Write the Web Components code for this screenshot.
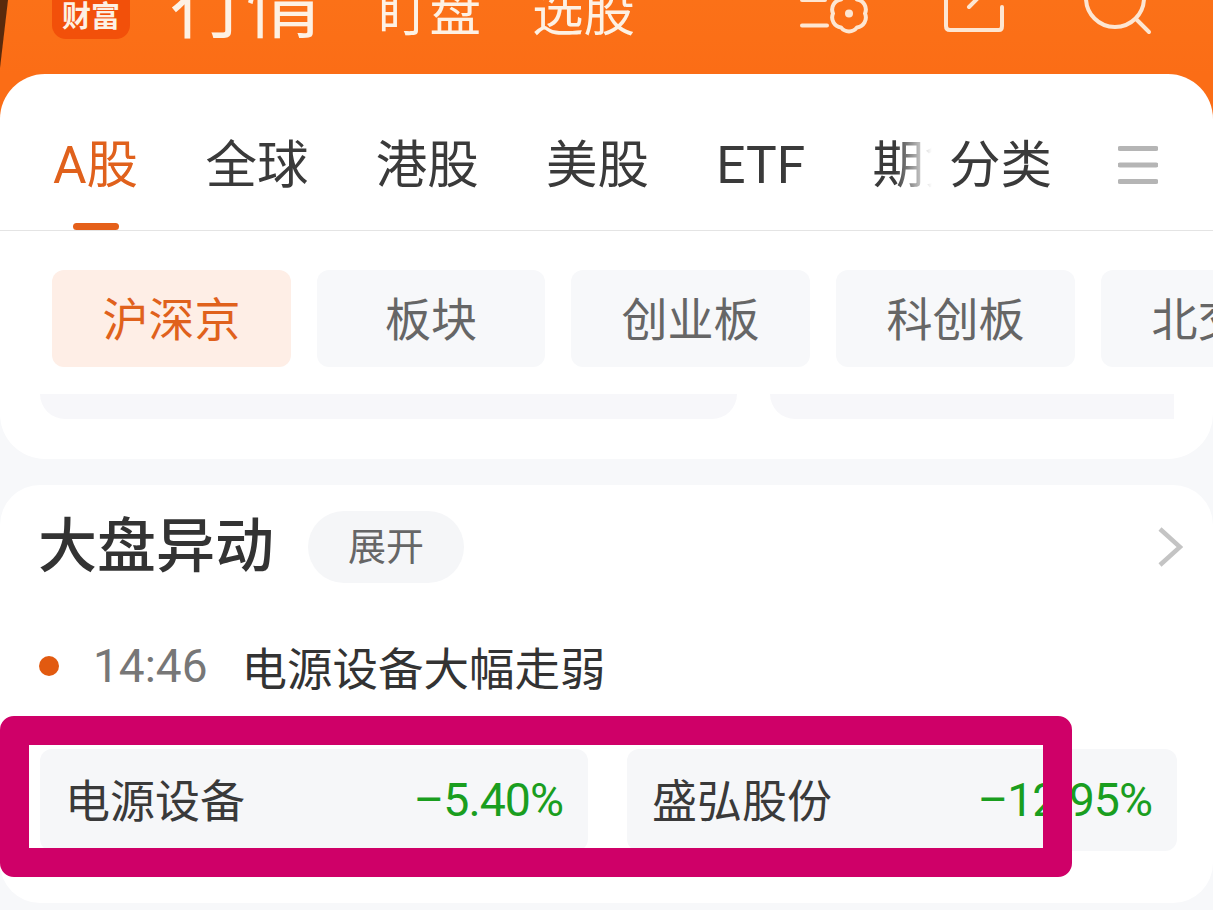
<!DOCTYPE html>
<html lang="zh">
<head>
<meta charset="utf-8">
<title>行情</title>
<style>
  html, body { margin: 0; padding: 0; background: #f7f8fa; }
  body { width: 1213px; height: 910px; overflow: hidden; position: relative; font-family: "Noto Sans CJK SC", sans-serif; color: #333; }
</style>
</head>
<body>
<app-header></app-header>
<market-card></market-card>
<move-card></move-card>
<mark-box></mark-box>

<script>
const CJK = `Roboto, "Noto Sans CJK SC", sans-serif`;

class AppHeader extends HTMLElement {
  connectedCallback() {
    this.attachShadow({mode: 'open'}).innerHTML = `
      <style>
        :host { display: flex; height: 74px; overflow: hidden; position: relative; align-items: flex-end; background: linear-gradient(#fb7118, #fb6d16); color: #fdf1e4; font-family: ${CJK}; }
        .edge { position: absolute; left: 0; top: 0; }
        .logo { width: 78px; height: 60px; margin: 0 40px 35px 52px; background: #f2500a; border-radius: 14px; box-sizing: border-box; padding-top: 20px; text-align: center; font-size: 29px; line-height: 36px; font-weight: 700; flex: none; }
        .main { font-size: 76px; line-height: 90px; margin: 0 56px 23px 0; flex: none; }
        .sub { font-size: 51.5px; line-height: 70px; margin: 0 51px 25px 0; flex: none; }
        .icons { margin-left: auto; flex: none; display: flex; }
      </style>
      <svg class="edge" width="10" height="74" viewBox="0 0 10 74"><path d="M0 0H8L0 68Z" fill="#5a2a0c"/></svg>
      <div class="logo">财富</div>
      <div class="main">行情</div>
      <div class="sub">盯盘</div>
      <div class="sub">选股</div>
      <svg class="icons" width="413" height="74" viewBox="800 0 413 74" fill="none" stroke="#fde6d2" stroke-width="4" stroke-linecap="round" stroke-linejoin="round">
        <path d="M802 0H825M802 25.500H827"/>
        <path d="M865 13.500A10 10 0 0 1 857 27.400A10 10 0 0 1 841 27.400A10 10 0 0 1 833 13.500A10 10 0 0 1 841 -0.400A10 10 0 0 1 857 -0.400A10 10 0 0 1 865 13.500Z"/>
        <circle cx="849" cy="13.500" r="4" fill="#fde6d2" stroke="none"/>
        <path d="M946 0V26q0 4 4 4H999q3 0 3-4V7"/>
        <path d="M969 7L980 -4"/>
        <circle cx="1115" cy="-2" r="29"/>
        <path d="M1136 19L1149 32"/>
      </svg>
    `;
  }
}
customElements.define('app-header', AppHeader);

class MarketTabs extends HTMLElement {
  connectedCallback() {
    this.attachShadow({mode: 'open'}).innerHTML = `
      <style>
        :host { display: flex; height: 156px; border-bottom: 1px solid #e4e4e4; font-family: ${CJK}; font-size: 51.5px; color: #3a3a3a; box-sizing: content-box; }
        .scroll { width: 935px; flex: none; overflow: hidden; display: flex; gap: 67.3px; padding-left: 53px; box-sizing: border-box; -webkit-mask-image: linear-gradient(90deg, #000 895px, transparent 932px); mask-image: linear-gradient(90deg, #000 895px, transparent 932px); }
        .tab { flex: none; display: flex; flex-direction: column; align-items: center; padding-top: 57px; box-sizing: border-box; height: 156px; }
        .tab span { line-height: 70px; white-space: nowrap; }
        .tab.on { color: #e0611c; }
        .tab i { display: block; width: 46px; height: 7px; margin-top: 22px; border-radius: 4px; background: #e5601a; }
        .cat { margin: 57px 0 0 14px; line-height: 70px; flex: none; }
        svg { margin: 72px 0 0 66px; flex: none; }
      </style>
      <div class="scroll">
        <div class="tab on"><span>A股</span><i></i></div>
        <div class="tab"><span>全球</span></div>
        <div class="tab"><span>港股</span></div>
        <div class="tab"><span>美股</span></div>
        <div class="tab"><span>ETF</span></div>
        <div class="tab"><span>期货</span></div>
      </div>
      <div class="cat">分类</div>
      <svg width="40" height="38" viewBox="0 0 40 38" stroke="#b5b5b5" stroke-width="5" stroke-linecap="round"><path d="M2 2.5H38M2 19H38M2 35.5H38"/></svg>
    `;
  }
}
customElements.define('market-tabs', MarketTabs);

class ChipRow extends HTMLElement {
  connectedCallback() {
    const names = ['沪深京', '板块', '创业板', '科创板', '北交所'];
    this.attachShadow({mode: 'open'}).innerHTML = `
      <style>
        :host { display: flex; gap: 26px; padding: 39px 0 0 52px; overflow: hidden; font-family: ${CJK}; font-size: 46px; color: #666; }
        div { flex: none; height: 97px; line-height: 101px; min-width: 228px; padding: 0 50.5px; box-sizing: border-box; text-align: center; border-radius: 12px; background: #f7f8fa; }
        div.on { background: #feeee6; color: #e0611c; }
      </style>
      ${names.map((n, i) => `<div class="${i == 0 ? 'on' : ''}">${n}</div>`).join('')}
    `;
  }
}
customElements.define('chip-row', ChipRow);

class MarketCard extends HTMLElement {
  connectedCallback() {
    this.attachShadow({mode: 'open'}).innerHTML = `
      <style>
        :host { display: block; background: linear-gradient(#fb6d16 50px, #f7f8fa 50px); }
        .card { background: #fff; border-radius: 45px; padding-bottom: 40px; overflow: hidden; }
        .stubs { display: flex; gap: 33px; padding: 27px 0 0 40px; }
        .stubs div { height: 25px; background: #f7f7fa; }
        .a { width: 697px; border-radius: 0 0 26px 26px; }
        .b { width: 404px; border-radius: 0 0 0 26px; }
      </style>
      <div class="card">
        <market-tabs></market-tabs>
        <chip-row></chip-row>
        <div class="stubs"><div class="a"></div><div class="b"></div></div>
      </div>
    `;
  }
}
customElements.define('market-card', MarketCard);

class MoveTile extends HTMLElement {
  connectedCallback() {
    this.attachShadow({mode: 'open'}).innerHTML = `
      <style>
        :host { display: flex; align-items: center; justify-content: space-between; height: 102px; box-sizing: border-box; padding: 0 25px 0 25px; background: #f6f7f9; border-radius: 12px; font-family: ${CJK}; font-size: 45px; color: #3a3a3a; }
        span { margin-bottom: 3px; }
        b { font-weight: 400; font-size: 46.5px; letter-spacing: -1px; color: #1a9e1f; }
      </style>
      <span>${this.getAttribute('name')}</span><b>${this.getAttribute('pct')}</b>
    `;
  }
}
customElements.define('move-tile', MoveTile);

class MoveCard extends HTMLElement {
  connectedCallback() {
    this.attachShadow({mode: 'open'}).innerHTML = `
      <style>
        :host { display: block; margin-top: 26px; height: 418px; box-sizing: border-box; padding: 26px 36px 52px 40px; background: #fff; border-radius: 40px; font-family: ${CJK}; }
        .head { display: flex; align-items: center; height: 72px; }
        h2 { margin: 0 0 0 -2px; font-size: 59px; line-height: 72px; font-weight: 500; color: #333; }
        .pill { margin-left: 34px; width: 156px; height: 72px; line-height: 72px; border-radius: 36px; background: #f5f6f8; color: #666; font-size: 38px; text-align: center; }
        .head svg { margin-left: auto; margin-right: -6px; }
        .row { display: flex; align-items: center; height: 60px; margin-top: 53px; font-size: 45.5px; color: #333; }
        .dot { width: 20px; height: 20px; border-radius: 50%; background: #e25a10; margin-left: -1px; }
        time { margin: 0 34px 0 34px; font-size: 46px; color: #777; }
        .tiles { display: flex; gap: 39px; margin-top: 53px; }
        move-tile { width: 548px; }
        move-tile + move-tile { width: 550px; }
      </style>
      <div class="head">
        <h2>大盘异动</h2>
        <div class="pill">展开</div>
        <svg width="26" height="40" viewBox="0 0 26 40" fill="none" stroke="#c4c4c4" stroke-width="4.5"><path d="M3 2L23 20L3 38"/></svg>
      </div>
      <div class="row"><span class="dot"></span><time>14:46</time><span>电源设备大幅走弱</span></div>
      <div class="tiles">
        <move-tile name="电源设备" pct="–5.40%"></move-tile>
        <move-tile name="盛弘股份" pct="–12.95%"></move-tile>
      </div>
    `;
  }
}
customElements.define('move-card', MoveCard);

// the annotation frame drawn over the screenshot
class MarkBox extends HTMLElement {
  connectedCallback() {
    this.attachShadow({mode: 'open'}).innerHTML = `
      <style>
        :host { display: block; position: absolute; left: 0; top: 716px; width: 1072px; height: 161px; box-sizing: border-box; border: 29px solid #cf0068; border-radius: 14px; }
      </style>
    `;
  }
}
customElements.define('mark-box', MarkBox);
</script>
</body>
</html>
